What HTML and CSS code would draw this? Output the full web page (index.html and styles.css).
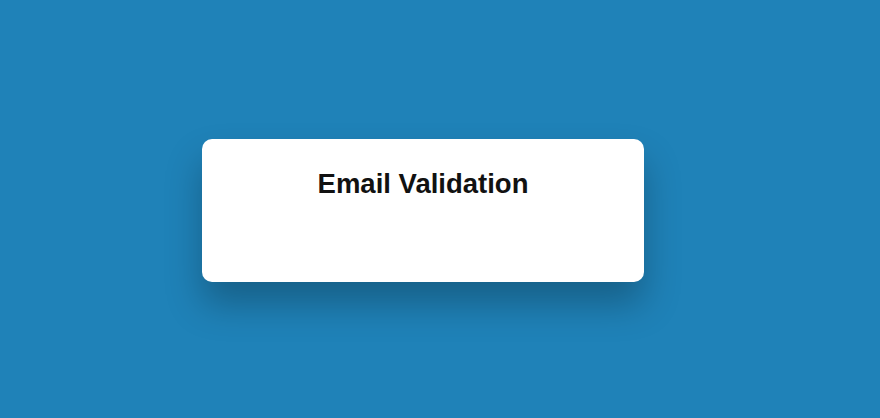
FILE: index.html
```html
<!DOCTYPE html>
<html>
<head>
<meta charset="utf-8">
<link rel="stylesheet" href="styles.css">
</head>
<body>
<div class="page">
  <div class="card">
    <h1 class="title">Email Validation</h1>
  </div>
</div>
</body>
</html>
```
FILE: styles.css
```css
html, body {
  margin: 0;
  padding: 0;
}
body {
  background: #1f82b8;
  font-family: "Liberation Sans", Arial, sans-serif;
}
.page {
  height: 418px;
  display: flex;
  align-items: flex-start;
  justify-content: center;
  padding-top: 139px;
  box-sizing: border-box;
}
.card {
  width: 442px;
  height: 143px;
  background: #fff;
  border-radius: 10px;
  box-shadow: 0 22px 36px rgba(0, 0, 0, 0.26);
  box-sizing: border-box;
  padding-top: 29px;
  margin-right: 34px;
}
.title {
  margin: 0;
  text-align: center;
  font-size: 27.5px;
  font-weight: bold;
  color: #111;
}
```
